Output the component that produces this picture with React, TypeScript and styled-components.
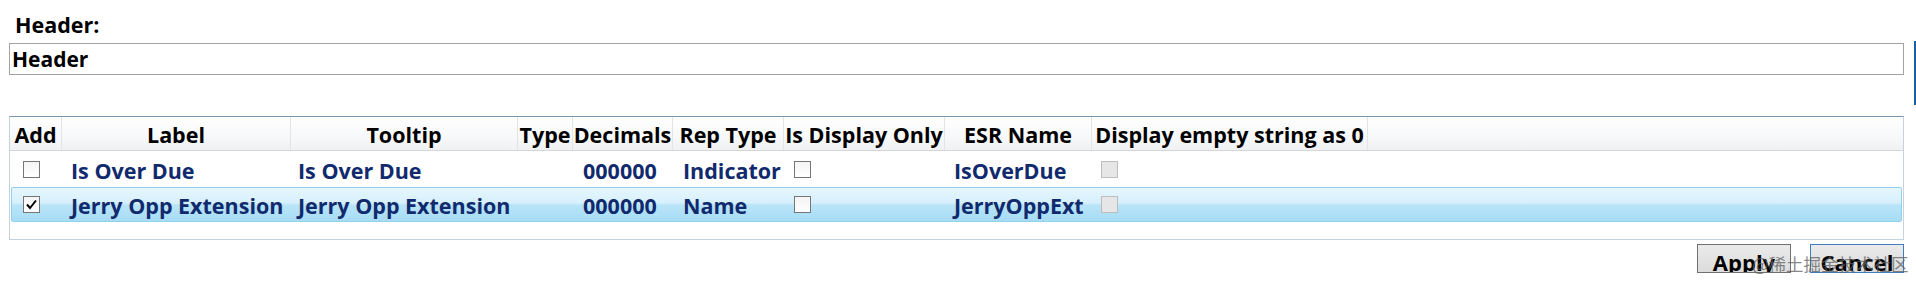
import React from "react";
import styled, { createGlobalStyle } from "styled-components";

const GlobalStyle = createGlobalStyle`
  html, body {
    margin: 0;
    padding: 0;
    background: #ffffff;
  }
  body {
    font-family: "Open Sans", "Noto Sans", sans-serif;
  }
`;

const COLUMNS = "52px 229px 227px 55px 100px 111px 161px 147px 276px 1fr";

const Page = styled.div`
  position: relative;
  display: flex;
  width: 1916px;
  height: 281px;
  overflow: hidden;
`;

const Main = styled.div`
  display: flex;
  flex-direction: column;
  flex: 1;
  padding-left: 9px;
`;

const EdgeBar = styled.div`
  width: 2px;
  height: 64px;
  margin: 41px 0 0 10px;
  background: #1c5e9f;
`;

const FieldLabel = styled.div`
  margin: 10px 0 0 6px;
  font-size: 21.5px;
  line-height: 30px;
  font-weight: 700;
  color: #000;
`;

const TextInput = styled.input`
  box-sizing: border-box;
  width: 100%;
  height: 32px;
  margin-top: 3px;
  padding: 0 0 0 2px;
  border: 1px solid #a3a3a3;
  font-family: "Open Sans", "Noto Sans", sans-serif;
  font-size: 21px;
  font-weight: 700;
  color: #000;
  outline: none;
`;

const Grid = styled.div`
  box-sizing: border-box;
  height: 124px;
  margin-top: 41px;
  border: 1px solid #c3d3df;
  border-top-color: #7895ad;
  background: #fff;
`;

const HeaderRow = styled.div`
  display: grid;
  grid-template-columns: ${COLUMNS};
  height: 33px;
  border-bottom: 1px solid #d6d6d6;
  background: linear-gradient(to bottom, #ffffff 0%, #f7f8f9 60%, #f0f1f2 100%);
`;

const HeaderCell = styled.div<{ $last?: boolean }>`
  display: flex;
  align-items: center;
  justify-content: center;
  padding-top: 2px;
  box-sizing: border-box;
  border-right: ${(p) => (p.$last ? "none" : "1px solid #e2e4e6")};
  font-size: 21.5px;
  font-weight: 700;
  color: #000;
  white-space: nowrap;
`;

const DataRow = styled.div<{ $selected?: boolean; $height: number }>`
  display: grid;
  grid-template-columns: ${COLUMNS};
  box-sizing: border-box;
  height: ${(p) => p.$height}px;
  margin: 0 1px;
  border: 1px solid ${(p) => (p.$selected ? "#93d0ee" : "transparent")};
  border-radius: 2px;
  background: ${(p) =>
    p.$selected
      ? "linear-gradient(to bottom, #e6f6fd 0%, #d6f0fc 45%, #b9e4f8 52%, #a7dcf5 100%)"
      : "transparent"};
`;

const Cell = styled.div<{ $pad?: number }>`
  display: flex;
  align-items: center;
  padding: 2px 0 0 ${(p) => p.$pad ?? 7}px;
  box-sizing: border-box;
  font-size: 21.5px;
  font-weight: 700;
  color: #102a6d;
  white-space: nowrap;
`;

const BoxCell = styled.div<{ $pad?: number }>`
  display: flex;
  align-items: center;
  padding-left: ${(p) => p.$pad ?? 8}px;
`;

const CheckBox = styled.span<{ $disabled?: boolean }>`
  display: inline-flex;
  align-items: center;
  justify-content: center;
  box-sizing: border-box;
  width: 17px;
  height: 17px;
  border: 1px solid ${(p) => (p.$disabled ? "#bdbdbd" : "#767676")};
  background: ${(p) =>
    p.$disabled ? "#e6e6e6" : "linear-gradient(to bottom, #f4f4f4, #ffffff)"};
`;

const ButtonBar = styled.div`
  display: flex;
  justify-content: flex-end;
  gap: 19px;
  margin-top: 4px;
`;

const Button = styled.button<{ $default?: boolean }>`
  box-sizing: border-box;
  width: 94px;
  height: 29px;
  padding: 3px 0 0;
  overflow: hidden;
  border: 1px solid ${(p) => (p.$default ? "#3d7fc0" : "#707070")};
  background: linear-gradient(to bottom, #eaeaea, #dcdcdc);
  font-family: "Open Sans", "Noto Sans", sans-serif;
  font-size: 22px;
  font-weight: 700;
  line-height: 29px;
  color: #000;
`;

const Watermark = styled.div`
  position: absolute;
  left: 1752px;
  top: 255px;
  font-family: "Noto Sans CJK SC", sans-serif;
  font-size: 17.5px;
  line-height: 18px;
  color: rgba(95, 95, 95, 0.75);
  pointer-events: none;
  white-space: nowrap;
`;

const Check = () => (
  <svg width="13" height="13" viewBox="0 0 13 13">
    <path d="M2 6.5 L5 10 L11 2.5" fill="none" stroke="#000" strokeWidth="2" />
  </svg>
);

type Item = {
  add: boolean;
  label: string;
  tooltip: string;
  decimals: string;
  repType: string;
  esr: string;
};

const items: Item[] = [
  { add: false, label: "Is Over Due", tooltip: "Is Over Due", decimals: "000000", repType: "Indicator", esr: "IsOverDue" },
  { add: true, label: "Jerry Opp Extension", tooltip: "Jerry Opp Extension", decimals: "000000", repType: "Name", esr: "JerryOppExt" },
];

const headers = [
  "Add",
  "Label",
  "Tooltip",
  "Type",
  "Decimals",
  "Rep Type",
  "Is Display Only",
  "ESR Name",
  "Display empty string as 0",
  "",
];

export default function App() {
  return (
    <Page>
      <GlobalStyle />
      <Main>
        <FieldLabel>Header:</FieldLabel>
        <TextInput defaultValue="Header" />
        <Grid>
          <HeaderRow>
            {headers.map((h, i) => (
              <HeaderCell key={i} $last={i === headers.length - 1}>
                {h}
              </HeaderCell>
            ))}
          </HeaderRow>
          {items.map((it, i) => (
            <DataRow key={it.esr} $selected={it.add} $height={i === 0 ? 36 : 35}>
              <BoxCell $pad={11}>
                <CheckBox>{it.add && <Check />}</CheckBox>
              </BoxCell>
              <Cell $pad={7}>{it.label}</Cell>
              <Cell $pad={5}>{it.tooltip}</Cell>
              <Cell />
              <Cell $pad={8}>{it.decimals}</Cell>
              <Cell $pad={8}>{it.repType}</Cell>
              <BoxCell $pad={8}>
                <CheckBox />
              </BoxCell>
              <Cell $pad={7}>{it.esr}</Cell>
              <BoxCell $pad={7}>
                <CheckBox $disabled />
              </BoxCell>
              <Cell />
            </DataRow>
          ))}
        </Grid>
        <ButtonBar>
          <Button>Apply</Button>
          <Button $default>Cancel</Button>
        </ButtonBar>
      </Main>
      <EdgeBar />
      <Watermark>@稀土掘金技术社区</Watermark>
    </Page>
  );
}
